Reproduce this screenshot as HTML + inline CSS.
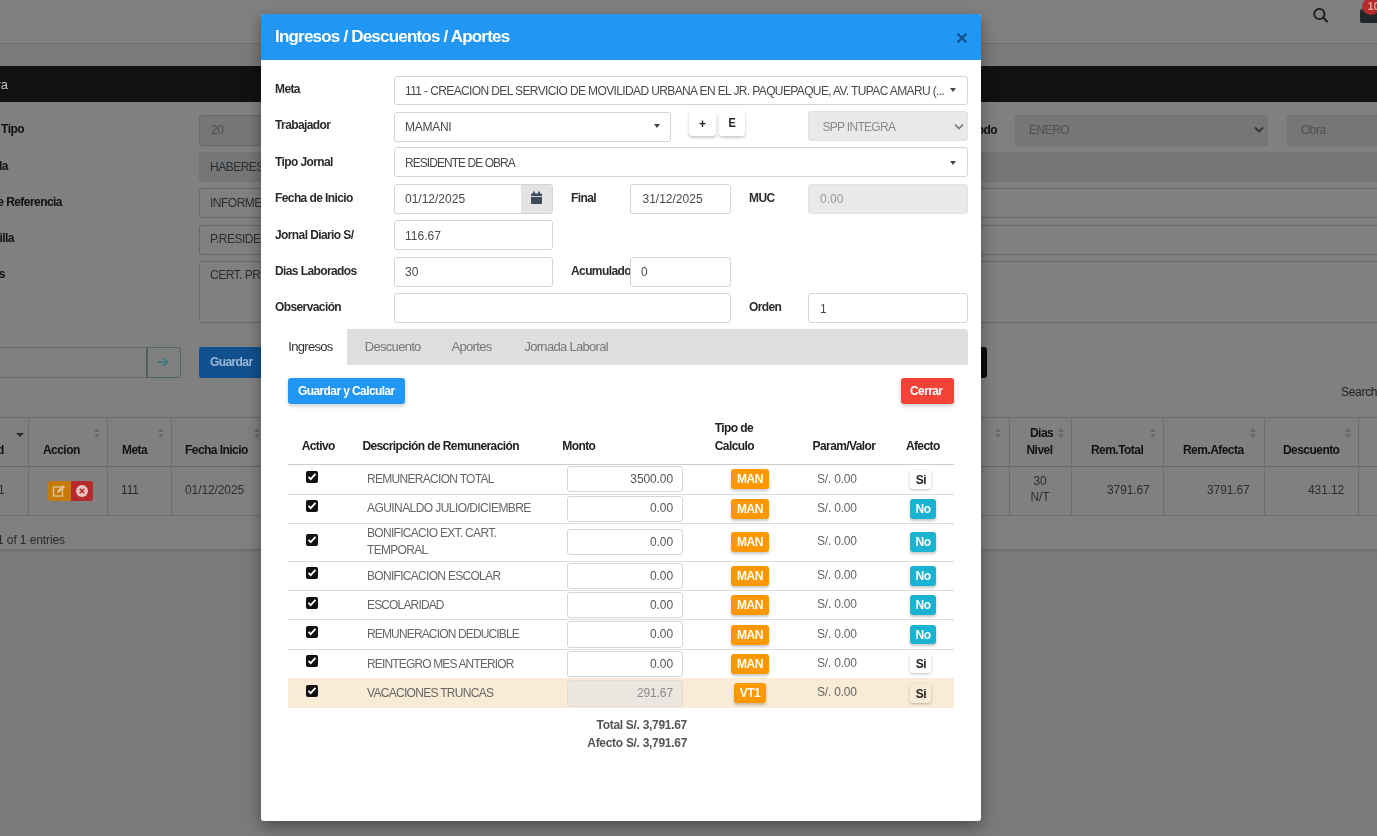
<!DOCTYPE html><html><head><meta charset="utf-8"><style>
*{margin:0;padding:0;box-sizing:border-box}
html,body{width:1377px;height:836px;overflow:hidden;background:#7a7b7c;font-family:"Liberation Sans",sans-serif}
.a{position:absolute}
.t{position:absolute;white-space:nowrap;line-height:12px;font-size:12px}
.b{font-weight:bold}
.bg{color:#111;font-weight:bold;letter-spacing:-0.55px}
.bin{position:absolute;border:1px solid #67696c;border-radius:3px;background:#808080}
.bdis{background:#747677}
.btx{color:#2a2d30;letter-spacing:-0.5px}
#modal{position:absolute;left:261px;top:14px;width:720px;height:807px;background:#fff;border-radius:3px;box-shadow:0 5px 15px rgba(0,0,0,.38);overflow:hidden;will-change:transform}
#mh{position:absolute;left:0;top:0;width:720px;height:46px;background:#2196f3}
.lbl{position:absolute;white-space:nowrap;font-size:12px;line-height:12px;font-weight:bold;color:#2b2b2b;letter-spacing:-0.6px}
.inp{position:absolute;border:1px solid #d4d4d4;border-radius:3px;background:#fff}
.dis{background:#e9e9e9;border-color:#e2e2e2}
.itx{position:absolute;white-space:nowrap;font-size:12px;line-height:12px;color:#4a4a4a}
.up{letter-spacing:-0.7px}
.caret{position:absolute;width:0;height:0;border-left:3.2px solid transparent;border-right:3.2px solid transparent;border-top:4px solid #444}
.cell{position:absolute;white-space:nowrap;font-size:12px;line-height:12px;color:#666;letter-spacing:-0.7px}
.th{position:absolute;white-space:nowrap;font-size:12px;line-height:18px;font-weight:bold;color:#212121;letter-spacing:-0.6px}
.badge{position:absolute;border-radius:3px;color:#fff;font-weight:bold;font-size:12px;text-align:center;box-shadow:0 2px 3px rgba(0,0,0,.22);letter-spacing:-0.5px}
.man{background:#ff9800}
.no{background:#1ab3d1}
.si{background:#fff;color:#222;box-shadow:0 1px 3px rgba(0,0,0,.25)}
.chk{position:absolute;width:12px;height:12px;background:#111;border-radius:2px}
.rline{position:absolute;left:27px;width:666px;height:1px;background:#dcdcdc}
</style></head><body>
<div id="bgp" style="position:absolute;left:0;top:0;width:1377px;height:836px;overflow:hidden;will-change:transform">
<div class="a" style="left:0;top:0;width:1377px;height:43px;background:#808080"></div>
<div class="a" style="left:0;top:43px;width:1377px;height:1px;background:#6e6e6e"></div>
<div class="a" style="left:0;top:44px;width:1377px;height:22px;background:#7a7a7a"></div>
<div class="a" style="left:0;top:66px;width:1377px;height:36px;background:#111"></div>
<div class="t" style="right:1369px;top:78px;color:#c4c4c4;font-size:13px;line-height:13px">Obra</div>
<div class="a" style="left:0;top:102px;width:1377px;height:447px;background:#808080"></div>
<svg class="a" style="left:1311px;top:6px" width="20" height="20" viewBox="0 0 20 20"><circle cx="8.4" cy="8" r="5.2" fill="none" stroke="#1a1a1a" stroke-width="1.8"/><line x1="12.2" y1="11.8" x2="16.6" y2="16" stroke="#1a1a1a" stroke-width="2"/></svg>
<div class="a" style="left:1360px;top:9px;width:20px;height:14px;background:#23272b;border-radius:2px"></div>
<div class="a" style="left:1362px;top:-2px;width:18px;height:17px;background:#b5282c;border-radius:50%"></div>
<div class="t" style="left:1367.5px;top:1px;color:#e0a890;font-size:11px;line-height:11px;font-weight:bold">10</div>
<div class="t bg" style="right:1353px;top:123px">Doc. Tipo</div>
<div class="t bg" style="right:1369px;top:160px">Planilla</div>
<div class="t bg" style="right:1315px;top:196px">Documento de Referencia</div>
<div class="t bg" style="right:1363px;top:232px">Plantilla</div>
<div class="t bg" style="right:1372px;top:268px">Notas</div>
<div class="bin bdis" style="left:199px;top:115px;width:80px;height:30.5px"></div><div class="t btx" style="left:211px;top:124px;color:#4a4c4e">20</div>
<div class="bin bdis" style="left:199px;top:151.5px;width:1300px;height:30.5px;border-color:#707274"></div><div class="t btx" style="left:210px;top:161px">HABERES</div>
<div class="bin" style="left:199px;top:188px;width:1300px;height:30px"></div><div class="t btx" style="left:210px;top:197px">INFORME</div>
<div class="bin" style="left:199px;top:224.5px;width:1300px;height:30px"></div><div class="t btx" style="left:210px;top:233px">P.RESIDENTE</div>
<div class="bin" style="left:199px;top:260.5px;width:1300px;height:62px"></div><div class="t btx" style="left:210px;top:269px">CERT. PRESUPUESTAL</div>
<div class="t bg" style="right:380px;top:124px">Periodo</div>
<div class="bin bdis" style="left:1014.5px;top:115px;width:253.5px;height:31px;border-color:#707274"></div><div class="t btx" style="left:1029px;top:124px;color:#4e5052">ENERO</div>
<svg class="a" style="left:1253px;top:125px" width="12" height="10" viewBox="0 0 12 10"><polyline points="2,2.5 6,6.5 10,2.5" fill="none" stroke="#333" stroke-width="1.8"/></svg>
<div class="bin bdis" style="left:1286.5px;top:115px;width:200px;height:31px;border-color:#707274"></div><div class="t btx" style="left:1301px;top:124px;color:#4e5052">Obra</div>
<div class="bin" style="left:-10px;top:347px;width:157px;height:30.5px;border-radius:3px 0 0 3px;border-right-color:#555"></div>
<div class="bin" style="left:146.5px;top:347px;width:34.5px;height:30.5px;border-color:#4f6466;border-radius:0 3px 3px 0"></div>
<svg class="a" style="left:155px;top:354px" width="16" height="16" viewBox="0 0 16 16"><path d="M3 8h9M8.5 4l4 4-4 4" fill="none" stroke="#3f7a80" stroke-width="1.9"/></svg>
<div class="a" style="left:199px;top:347px;width:70px;height:31px;background:#10508e;border-radius:3px"></div><div class="t b" style="left:210px;top:356px;color:#9ab8d6;letter-spacing:-0.6px">Guardar</div>
<div class="a" style="left:960px;top:347px;width:27px;height:31px;background:#0d0d0d;border-radius:3px"></div>
<div class="t" style="left:1341px;top:386px;color:#1e1e1e;letter-spacing:-0.3px">Search:</div>
<div class="a" style="left:0;top:417px;width:1377px;height:1px;background:#6c6c6c"></div>
<div class="a" style="left:0;top:465.5px;width:1377px;height:1.5px;background:#666"></div>
<div class="a" style="left:0;top:515px;width:1377px;height:1px;background:#6c6c6c"></div>
<div class="a" style="left:28px;top:417px;width:1px;height:98px;background:#6e6e6e"></div>
<div class="a" style="left:107px;top:417px;width:1px;height:98px;background:#6e6e6e"></div>
<div class="a" style="left:170.5px;top:417px;width:1px;height:98px;background:#6e6e6e"></div>
<div class="a" style="left:1008.5px;top:417px;width:1px;height:98px;background:#6e6e6e"></div>
<div class="a" style="left:1071px;top:417px;width:1px;height:98px;background:#6e6e6e"></div>
<div class="a" style="left:1163px;top:417px;width:1px;height:98px;background:#6e6e6e"></div>
<div class="a" style="left:1263.5px;top:417px;width:1px;height:98px;background:#6e6e6e"></div>
<div class="a" style="left:1357.5px;top:417px;width:1px;height:98px;background:#6e6e6e"></div>
<div class="t bg" style="left:-3px;top:444px">d</div>
<div class="t bg" style="left:43px;top:444px">Accion</div>
<div class="t bg" style="left:122px;top:444px">Meta</div>
<div class="t bg" style="left:185px;top:444px">Fecha Inicio</div>
<div class="t bg" style="left:1030px;top:427px">Dias</div>
<div class="t bg" style="left:1026.5px;top:444px">Nivel</div>
<div class="t bg" style="left:1091px;top:444px">Rem.Total</div>
<div class="t bg" style="left:1183px;top:444px">Rem.Afecta</div>
<div class="t bg" style="left:1283px;top:444px">Descuento</div>
<div class="t btx" style="left:-2px;top:484px;letter-spacing:-0.1px">1</div>
<div class="t btx" style="left:121px;top:484px;letter-spacing:-0.1px">111</div>
<div class="t btx" style="left:185px;top:484px;letter-spacing:-0.1px">01/12/2025</div>
<div class="t btx" style="left:1033.5px;top:475px;letter-spacing:-0.1px">30</div>
<div class="t btx" style="left:1030.5px;top:491px;letter-spacing:-0.1px">N/T</div>
<div class="t btx" style="left:1107px;top:484px;letter-spacing:-0.1px">3791.67</div>
<div class="t btx" style="left:1207px;top:484px;letter-spacing:-0.1px">3791.67</div>
<div class="t btx" style="left:1308px;top:484px;letter-spacing:-0.1px">431.12</div>
<div class="a" style="left:94.2px;top:428px;width:0;height:0;border-left:3.5px solid transparent;border-right:3.5px solid transparent;border-bottom:4px solid #6a6a6a"></div>
<div class="a" style="left:94.2px;top:434px;width:0;height:0;border-left:3.5px solid transparent;border-right:3.5px solid transparent;border-top:4px solid #6a6a6a"></div>
<div class="a" style="left:157.5px;top:428px;width:0;height:0;border-left:3.5px solid transparent;border-right:3.5px solid transparent;border-bottom:4px solid #6a6a6a"></div>
<div class="a" style="left:157.5px;top:434px;width:0;height:0;border-left:3.5px solid transparent;border-right:3.5px solid transparent;border-top:4px solid #6a6a6a"></div>
<div class="a" style="left:253.5px;top:428px;width:0;height:0;border-left:3.5px solid transparent;border-right:3.5px solid transparent;border-bottom:4px solid #6a6a6a"></div>
<div class="a" style="left:253.5px;top:434px;width:0;height:0;border-left:3.5px solid transparent;border-right:3.5px solid transparent;border-top:4px solid #6a6a6a"></div>
<div class="a" style="left:995px;top:428px;width:0;height:0;border-left:3.5px solid transparent;border-right:3.5px solid transparent;border-bottom:4px solid #6a6a6a"></div>
<div class="a" style="left:995px;top:434px;width:0;height:0;border-left:3.5px solid transparent;border-right:3.5px solid transparent;border-top:4px solid #6a6a6a"></div>
<div class="a" style="left:1058.2px;top:428px;width:0;height:0;border-left:3.5px solid transparent;border-right:3.5px solid transparent;border-bottom:4px solid #6a6a6a"></div>
<div class="a" style="left:1058.2px;top:434px;width:0;height:0;border-left:3.5px solid transparent;border-right:3.5px solid transparent;border-top:4px solid #6a6a6a"></div>
<div class="a" style="left:1150.2px;top:428px;width:0;height:0;border-left:3.5px solid transparent;border-right:3.5px solid transparent;border-bottom:4px solid #6a6a6a"></div>
<div class="a" style="left:1150.2px;top:434px;width:0;height:0;border-left:3.5px solid transparent;border-right:3.5px solid transparent;border-top:4px solid #6a6a6a"></div>
<div class="a" style="left:1250.3px;top:428px;width:0;height:0;border-left:3.5px solid transparent;border-right:3.5px solid transparent;border-bottom:4px solid #6a6a6a"></div>
<div class="a" style="left:1250.3px;top:434px;width:0;height:0;border-left:3.5px solid transparent;border-right:3.5px solid transparent;border-top:4px solid #6a6a6a"></div>
<div class="a" style="left:1344.5px;top:428px;width:0;height:0;border-left:3.5px solid transparent;border-right:3.5px solid transparent;border-bottom:4px solid #6a6a6a"></div>
<div class="a" style="left:1344.5px;top:434px;width:0;height:0;border-left:3.5px solid transparent;border-right:3.5px solid transparent;border-top:4px solid #6a6a6a"></div>
<div class="a" style="left:16px;top:433px;width:0;height:0;border-left:4px solid transparent;border-right:4px solid transparent;border-top:4.5px solid #2a2a2a"></div>
<div class="a" style="left:48px;top:481px;width:23px;height:20px;background:#c67a0a;border-radius:3px 0 0 3px"></div>
<div class="a" style="left:71px;top:481px;width:22px;height:20px;background:#b52a2a;border-radius:0 3px 3px 0"></div>
<svg class="a" style="left:52px;top:484px" width="14" height="14" viewBox="0 0 14 14"><rect x="1.5" y="3" width="9" height="9" fill="none" stroke="#e0c090" stroke-width="1.4"/><path d="M5 9l1-3 5-5 2 2-5 5z" fill="#e0c090"/></svg>
<svg class="a" style="left:75px;top:484px" width="14" height="14" viewBox="0 0 14 14"><circle cx="7" cy="7" r="6" fill="#e8c0c0"/><path d="M4.8 4.8l4.4 4.4M9.2 4.8l-4.4 4.4" stroke="#b52a2a" stroke-width="1.6"/></svg>
<div class="t" style="left:-3px;top:534px;color:#2a2a2a;letter-spacing:-0.1px">1 of 1 entries</div>
<div class="a" style="left:0;top:549px;width:1377px;height:287px;background:#7a7a7a"></div><div class="a" style="left:0;top:549px;width:1377px;height:4px;background:linear-gradient(rgba(0,0,0,.12),rgba(0,0,0,0))"></div>
</div>
<div id="modal">
<div id="mh"></div>
<div class="t b" style="left:14px;top:14px;font-size:17px;line-height:17px;color:#fff;letter-spacing:-0.8px">Ingresos / Descuentos / Aportes</div>
<svg class="a" style="left:695px;top:18px" width="12" height="12" viewBox="0 0 12 12"><path d="M1.5 1.8L10.5 10.2M10.5 1.8L1.5 10.2" stroke="#0f4f8a" stroke-width="2.2"/></svg>
<div class="lbl" style="left:14px;top:68.5px">Meta</div>
<div class="lbl" style="left:14px;top:105.19999999999999px">Trabajador</div>
<div class="lbl" style="left:14px;top:142.3px">Tipo Jornal</div>
<div class="lbl" style="left:14px;top:178.4px">Fecha de Inicio</div>
<div class="lbl" style="left:14px;top:214.7px">Jornal Diario S/</div>
<div class="lbl" style="left:14px;top:251px">Dias Laborados</div>
<div class="lbl" style="left:14px;top:287.3px">Observación</div>
<div class="lbl" style="left:310px;top:178.4px">Final</div>
<div class="lbl" style="left:488px;top:178.4px">MUC</div>
<div class="lbl" style="left:310px;top:251px">Acumulado</div>
<div class="lbl" style="left:488px;top:287.3px">Orden</div>
<div class="inp " style="left:132.5px;top:61.5px;width:574.5px;height:29.0px"></div>
<div class="itx up" style="left:144px;top:71px;letter-spacing:-0.62px">111 - CREACION DEL SERVICIO DE MOVILIDAD URBANA EN EL JR. PAQUEPAQUE, AV. TUPAC AMARU (...</div>
<div class="caret" style="left:688.8px;top:74px"></div>
<div class="inp " style="left:132.5px;top:97.5px;width:277.5px;height:30.30000000000001px"></div>
<div class="itx up" style="left:144px;top:107px;letter-spacing:-0.27px">MAMANI</div>
<div class="caret" style="left:392.6px;top:109.5px"></div>
<div class="a" style="left:428px;top:97px;width:27px;height:25px;background:#fff;border-radius:3px;box-shadow:0 2px 3px rgba(0,0,0,.2),0 0 1px rgba(0,0,0,.15)"></div>
<div class="t b" style="left:438px;top:104px;color:#222;font-size:12px">+</div>
<div class="a" style="left:458px;top:97px;width:26px;height:25px;background:#fff;border-radius:3px;box-shadow:0 2px 3px rgba(0,0,0,.2),0 0 1px rgba(0,0,0,.15)"></div>
<div class="t b" style="left:467px;top:103px;color:#222;font-size:12px;transform:scaleX(.9)">E</div>
<div class="inp dis" style="left:547.4px;top:97px;width:159.60000000000002px;height:30px"></div>
<div class="itx up" style="left:561.5px;top:107px;color:#8a8a8a">SPP INTEGRA</div>
<svg class="a" style="left:692px;top:108px" width="12" height="10" viewBox="0 0 12 10"><polyline points="2,2.5 6,6.5 10,2.5" fill="none" stroke="#777" stroke-width="1.7"/></svg>
<div class="inp " style="left:132.5px;top:133px;width:574.5px;height:30px"></div>
<div class="itx up" style="left:144px;top:143px;letter-spacing:-0.95px">RESIDENTE DE OBRA</div>
<div class="caret" style="left:688.8px;top:146.5px"></div>
<div class="inp" style="left:132.5px;top:170.3px;width:159.5px;height:29.3px;border-radius:3px;overflow:hidden"><div class="a" style="right:0;top:0;width:31.5px;height:100%;background:#e3e3e3"></div></div>
<svg class="a" style="left:269px;top:177px" width="13" height="14" viewBox="0 0 13 14"><rect x="1" y="2.5" width="11" height="10.5" rx="1.2" fill="#3d4a57"/><rect x="3" y="0.5" width="1.8" height="3" fill="#3d4a57"/><rect x="8.2" y="0.5" width="1.8" height="3" fill="#3d4a57"/><rect x="1" y="5" width="11" height="0.9" fill="#e3e3e3"/></svg>
<div class="itx " style="left:144px;top:179.2px;letter-spacing:0px">01/12/2025</div>
<div class="inp " style="left:369px;top:170.3px;width:100.5px;height:29.299999999999983px"></div>
<div class="itx " style="left:381.5px;top:179.2px;letter-spacing:0px">31/12/2025</div>
<div class="inp dis" style="left:547.4px;top:170.3px;width:159.60000000000002px;height:29.299999999999983px"></div>
<div class="itx " style="left:559px;top:179.2px;color:#9a9a9a;letter-spacing:0px">0.00</div>
<div class="inp " style="left:132.5px;top:206.4px;width:159.5px;height:30.0px"></div>
<div class="itx " style="left:144px;top:215.5px;letter-spacing:0px">116.67</div>
<div class="inp " style="left:132.5px;top:242.60000000000002px;width:159.5px;height:30.0px"></div>
<div class="itx " style="left:144px;top:252px;letter-spacing:0px">30</div>
<div class="inp " style="left:369px;top:242.60000000000002px;width:100.5px;height:30.0px"></div>
<div class="itx " style="left:380px;top:252px;letter-spacing:0px">0</div>
<div class="inp " style="left:132.5px;top:279.3px;width:337.0px;height:29.399999999999977px"></div>
<div class="inp " style="left:547.4px;top:279.3px;width:159.60000000000002px;height:29.399999999999977px"></div>
<div class="itx " style="left:559px;top:288.5px;letter-spacing:0px">1</div>
<div class="a" style="left:86px;top:315.2px;width:621px;height:35.5px;background:#dedede;border-radius:0 4px 0 0"></div>
<div class="t" style="left:27.30000000000001px;top:326px;font-size:13px;line-height:13px;color:#333;letter-spacing:-0.7px">Ingresos</div>
<div class="t" style="left:103.80000000000001px;top:326px;font-size:13px;line-height:13px;color:#777;letter-spacing:-0.7px">Descuento</div>
<div class="t" style="left:190.60000000000002px;top:326px;font-size:13px;line-height:13px;color:#777;letter-spacing:-0.7px">Aportes</div>
<div class="t" style="left:263.4px;top:326px;font-size:13px;line-height:13px;color:#777;letter-spacing:-0.7px">Jornada Laboral</div>
<div class="a" style="left:27px;top:364.2px;width:117px;height:25.6px;background:#2196f3;border-radius:3px;box-shadow:0 2px 4px rgba(0,0,0,.2)"></div>
<div class="t b" style="left:37px;top:371px;color:#fff;letter-spacing:-0.6px">Guardar y Calcular</div>
<div class="a" style="left:640px;top:364.2px;width:53px;height:25.5px;background:#f44336;border-radius:3px;box-shadow:0 2px 4px rgba(0,0,0,.2)"></div>
<div class="t b" style="left:649px;top:371px;color:#fff;letter-spacing:-0.6px">Cerrar</div>
<div class="th" style="left:40.69999999999999px;top:423.2px">Activo</div>
<div class="th" style="left:101.39999999999998px;top:423.2px">Descripción de Remuneración</div>
<div class="th" style="left:301.29999999999995px;top:423.2px">Monto</div>
<div class="th" style="left:453.79999999999995px;top:405.4px">Tipo de</div>
<div class="th" style="left:453.79999999999995px;top:423.2px">Calculo</div>
<div class="th" style="left:551.6px;top:423.2px">Param/Valor</div>
<div class="th" style="left:644.9px;top:423.2px">Afecto</div>
<div class="a" style="left:27px;top:449.8px;width:666px;height:1.5px;background:#cdcdcd"></div>
<div class="chk" style="left:45px;top:456.85px"></div>
<svg class="a" style="left:45px;top:456.85px" width="12" height="12" viewBox="0 0 12 12"><path d="M2.5 5.9l2.2 2.3 4.8-5.3" fill="none" stroke="#fff" stroke-width="1.8"/></svg>
<div class="cell" style="left:106px;top:459.05px;letter-spacing:-0.7px">REMUNERACION TOTAL</div>
<div class="inp" style="left:305.5px;top:452.15000000000003px;width:116.2px;height:26.2px"></div>
<div class="cell" style="right:308px;top:459.05px;letter-spacing:-0.1px;color:#555">3500.00</div>
<div class="badge man" style="left:470px;top:455.35px;width:38px;height:20px;line-height:21.5px">MAN</div>
<div class="cell" style="left:556px;top:458.55px;letter-spacing:-0.2px">S/. 0.00</div>
<div class="badge si" style="left:649.3px;top:455.75px;width:21px;height:19px;line-height:20.5px;background:#fff">Si</div>
<div class="rline" style="top:479.7px"></div>
<div class="chk" style="left:45px;top:486.25px"></div>
<svg class="a" style="left:45px;top:486.25px" width="12" height="12" viewBox="0 0 12 12"><path d="M2.5 5.9l2.2 2.3 4.8-5.3" fill="none" stroke="#fff" stroke-width="1.8"/></svg>
<div class="cell" style="left:106px;top:488.45000000000005px;letter-spacing:-0.57px">AGUINALDO JULIO/DICIEMBRE</div>
<div class="inp" style="left:305.5px;top:481.55px;width:116.2px;height:26.2px"></div>
<div class="cell" style="right:308px;top:488.45000000000005px;letter-spacing:-0.1px;color:#555">0.00</div>
<div class="badge man" style="left:470px;top:484.75px;width:38px;height:20px;line-height:21.5px">MAN</div>
<div class="cell" style="left:556px;top:487.95px;letter-spacing:-0.2px">S/. 0.00</div>
<div class="badge no" style="left:649px;top:484.95px;width:26px;height:19.6px;line-height:21.2px">No</div>
<div class="rline" style="top:508.79999999999995px"></div>
<div class="chk" style="left:45px;top:519.75px"></div>
<svg class="a" style="left:45px;top:519.75px" width="12" height="12" viewBox="0 0 12 12"><path d="M2.5 5.9l2.2 2.3 4.8-5.3" fill="none" stroke="#fff" stroke-width="1.8"/></svg>
<div class="cell" style="left:106px;top:513.3px">BONIFICACIO EXT. CART.</div>
<div class="cell" style="left:106px;top:529.5px">TEMPORAL</div>
<div class="inp" style="left:305.5px;top:515.05px;width:116.2px;height:26.2px"></div>
<div class="cell" style="right:308px;top:521.95px;letter-spacing:-0.1px;color:#555">0.00</div>
<div class="badge man" style="left:470px;top:518.25px;width:38px;height:20px;line-height:21.5px">MAN</div>
<div class="cell" style="left:556px;top:521.45px;letter-spacing:-0.2px">S/. 0.00</div>
<div class="badge no" style="left:649px;top:518.45px;width:26px;height:19.6px;line-height:21.2px">No</div>
<div class="rline" style="top:546.7px"></div>
<div class="chk" style="left:45px;top:553.3px"></div>
<svg class="a" style="left:45px;top:553.3px" width="12" height="12" viewBox="0 0 12 12"><path d="M2.5 5.9l2.2 2.3 4.8-5.3" fill="none" stroke="#fff" stroke-width="1.8"/></svg>
<div class="cell" style="left:106px;top:555.5px;letter-spacing:-0.7px">BONIFICACION ESCOLAR</div>
<div class="inp" style="left:305.5px;top:548.5999999999999px;width:116.2px;height:26.2px"></div>
<div class="cell" style="right:308px;top:555.5px;letter-spacing:-0.1px;color:#555">0.00</div>
<div class="badge man" style="left:470px;top:551.8px;width:38px;height:20px;line-height:21.5px">MAN</div>
<div class="cell" style="left:556px;top:555.0px;letter-spacing:-0.2px">S/. 0.00</div>
<div class="badge no" style="left:649px;top:552.0px;width:26px;height:19.6px;line-height:21.2px">No</div>
<div class="rline" style="top:575.9px"></div>
<div class="chk" style="left:45px;top:582.5px"></div>
<svg class="a" style="left:45px;top:582.5px" width="12" height="12" viewBox="0 0 12 12"><path d="M2.5 5.9l2.2 2.3 4.8-5.3" fill="none" stroke="#fff" stroke-width="1.8"/></svg>
<div class="cell" style="left:106px;top:584.7px;letter-spacing:-0.85px">ESCOLARIDAD</div>
<div class="inp" style="left:305.5px;top:577.8px;width:116.2px;height:26.2px"></div>
<div class="cell" style="right:308px;top:584.7px;letter-spacing:-0.1px;color:#555">0.00</div>
<div class="badge man" style="left:470px;top:581.0px;width:38px;height:20px;line-height:21.5px">MAN</div>
<div class="cell" style="left:556px;top:584.2px;letter-spacing:-0.2px">S/. 0.00</div>
<div class="badge no" style="left:649px;top:581.2px;width:26px;height:19.6px;line-height:21.2px">No</div>
<div class="rline" style="top:605.1px"></div>
<div class="chk" style="left:45px;top:612.05px"></div>
<svg class="a" style="left:45px;top:612.05px" width="12" height="12" viewBox="0 0 12 12"><path d="M2.5 5.9l2.2 2.3 4.8-5.3" fill="none" stroke="#fff" stroke-width="1.8"/></svg>
<div class="cell" style="left:106px;top:614.25px;letter-spacing:-0.85px">REMUNERACION DEDUCIBLE</div>
<div class="inp" style="left:305.5px;top:607.3499999999999px;width:116.2px;height:26.2px"></div>
<div class="cell" style="right:308px;top:614.25px;letter-spacing:-0.1px;color:#555">0.00</div>
<div class="badge man" style="left:470px;top:610.55px;width:38px;height:20px;line-height:21.5px">MAN</div>
<div class="cell" style="left:556px;top:613.75px;letter-spacing:-0.2px">S/. 0.00</div>
<div class="badge no" style="left:649px;top:610.75px;width:26px;height:19.6px;line-height:21.2px">No</div>
<div class="rline" style="top:635.0px"></div>
<div class="chk" style="left:45px;top:641.45px"></div>
<svg class="a" style="left:45px;top:641.45px" width="12" height="12" viewBox="0 0 12 12"><path d="M2.5 5.9l2.2 2.3 4.8-5.3" fill="none" stroke="#fff" stroke-width="1.8"/></svg>
<div class="cell" style="left:106px;top:643.6500000000001px;letter-spacing:-0.85px">REINTEGRO MES ANTERIOR</div>
<div class="inp" style="left:305.5px;top:636.75px;width:116.2px;height:26.2px"></div>
<div class="cell" style="right:308px;top:643.6500000000001px;letter-spacing:-0.1px;color:#555">0.00</div>
<div class="badge man" style="left:470px;top:639.95px;width:38px;height:20px;line-height:21.5px">MAN</div>
<div class="cell" style="left:556px;top:643.1500000000001px;letter-spacing:-0.2px">S/. 0.00</div>
<div class="badge si" style="left:649.3px;top:640.35px;width:21px;height:19px;line-height:20.5px;background:#fff">Si</div>
<div class="rline" style="top:663.9px"></div>
<div class="a" style="left:27px;top:664.4px;width:666px;height:29.700000000000045px;background:#faebd7"></div>
<div class="chk" style="left:45px;top:670.75px"></div>
<svg class="a" style="left:45px;top:670.75px" width="12" height="12" viewBox="0 0 12 12"><path d="M2.5 5.9l2.2 2.3 4.8-5.3" fill="none" stroke="#fff" stroke-width="1.8"/></svg>
<div class="cell" style="left:106px;top:672.95px;letter-spacing:-0.7px">VACACIONES TRUNCAS</div>
<div class="inp" style="left:305.5px;top:666.05px;width:116.2px;height:26.5px;background:#ebe6df;border-color:#e3ddd5"></div>
<div class="cell" style="right:308px;top:672.95px;letter-spacing:-0.1px;color:#8a8a8a">291.67</div>
<div class="badge man" style="left:473px;top:669.25px;width:32px;height:19.5px;line-height:21px">VT1</div>
<div class="cell" style="left:556px;top:672.45px;letter-spacing:-0.2px">S/. 0.00</div>
<div class="badge si" style="left:649.3px;top:669.65px;width:21px;height:19px;line-height:20.5px;background:#faebd7">Si</div>
<div class="t b" style="right:294px;top:705.4px;color:#555;letter-spacing:-0.3px">Total S/. 3,791.67</div>
<div class="t b" style="right:294px;top:722.7px;color:#555;letter-spacing:-0.3px">Afecto S/. 3,791.67</div>
</div>
</body></html>
